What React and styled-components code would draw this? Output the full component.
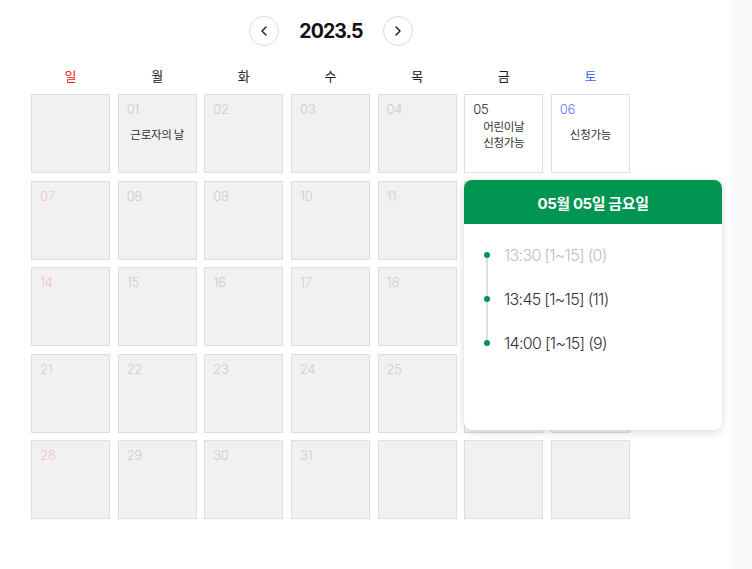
import React from "react";
import styled, { createGlobalStyle } from "styled-components";
import { ChevronLeft, ChevronRight } from "lucide-react";

const Global = createGlobalStyle`
  html, body { margin: 0; padding: 0; background: #fff; }
  body { font-family: Inter, "Noto Sans CJK KR", sans-serif; color: #222; }
`;

const Page = styled.div`
  display: flex;
  height: 569px;
  overflow: hidden;
`;

const Main = styled.div`
  flex: 1;
  padding: 16px 0 0 31px;
`;

const SideStrip = styled.div`
  width: 21px;
  background: #fafafa;
`;

const Calendar = styled.div`
  width: 599px;
`;

const Header = styled.div`
  display: flex;
  align-items: center;
  justify-content: center;
  gap: 20px;
  height: 30px;
  padding-left: 1px;
`;

const NavButton = styled.button`
  width: 30px;
  height: 30px;
  border-radius: 50%;
  border: 1px solid #dcdcdc;
  background: #fff;
  display: flex;
  align-items: center;
  justify-content: center;
  padding: 0;
  color: #222;
  cursor: pointer;
`;

const Title = styled.div`
  font-family: Inter, sans-serif;
  font-weight: 700;
  font-size: 19.5px;
  letter-spacing: -0.9px;
  color: #111;
`;

const WeekRow = styled.div`
  display: grid;
  grid-template-columns: repeat(7, 1fr);
  column-gap: 7.5px;
  margin-top: 20px;
  height: 20px;
  margin-bottom: 8px;
`;

const WeekDay = styled.div`
  text-align: center;
  font-size: 13px;
  line-height: 20px;
  font-family: "Noto Sans CJK KR", sans-serif;
  color: ${(p) => (p.$tone === "sun" ? "#e8241c" : p.$tone === "sat" ? "#3d6cf0" : "#222")};
`;

const GridWrap = styled.div`
  position: relative;
`;

const Grid = styled.div`
  display: grid;
  grid-template-columns: repeat(7, 1fr);
  grid-auto-rows: 79px;
  gap: 7.5px;
`;

const Cell = styled.div`
  box-sizing: border-box;
  border: 1px solid #dedede;
  background: ${(p) => (p.$open ? "#fff" : "#f1f1f1")};
  display: grid;
  grid-template: 1fr / 1fr;
  padding: 0 8px;
`;

const DayNum = styled.div`
  grid-area: 1 / 1;
  align-self: start;
  margin-top: 6px;
  font-family: Inter, sans-serif;
  font-weight: 300;
  font-size: 13px;
  line-height: 16px;
  letter-spacing: -0.3px;
  color: ${(p) => p.$color};
`;

const Labels = styled.div`
  grid-area: 1 / 1;
  align-self: center;
  text-align: center;
  font-family: "Noto Sans CJK KR", sans-serif;
  font-size: 11.5px;
  line-height: 16px;
  color: #333;
  letter-spacing: -0.3px;
`;

const Popup = styled.div`
  position: absolute;
  left: 433px;
  top: 86px;
  width: 258px;
  height: 250px;
  background: #fff;
  border-radius: 8px;
  box-shadow: 0 2px 8px rgba(0, 0, 0, 0.16);
  overflow: hidden;
  display: flex;
  flex-direction: column;
`;

const PopupHead = styled.div`
  height: 44px;
  background: #009551;
  color: #fff;
  display: flex;
  align-items: center;
  justify-content: center;
  font-family: Inter, "Noto Sans CJK KR", sans-serif;
  font-weight: 700;
  font-size: 15px;
  letter-spacing: -0.4px;
`;

const TimeList = styled.ul`
  list-style: none;
  margin: 9px 0 0 0;
  padding: 0 0 0 20px;
  position: relative;
  &::before {
    content: "";
    position: absolute;
    left: 22px;
    top: 22px;
    bottom: 22px;
    width: 2px;
    background: #dddddd;
  }
`;

const TimeItem = styled.li`
  height: 44px;
  display: flex;
  align-items: center;
  gap: 14px;
  font-family: Inter, sans-serif;
  font-weight: 300;
  font-size: 16px;
  letter-spacing: -0.7px;
  color: ${(p) => (p.$disabled ? "#bdbdbd" : "#333")};
  position: relative;
`;

const Dot = styled.span`
  width: 6px;
  height: 6px;
  border-radius: 50%;
  background: #009551;
  flex: none;
  position: relative;
`;

const days = [
  { n: "" },
  { n: "01", labels: ["근로자의 날"] },
  { n: "02" },
  { n: "03" },
  { n: "04" },
  { n: "05", open: true, labels: ["어린이날", "신청가능"] },
  { n: "06", open: true, labels: ["신청가능"] },
  ...Array.from({ length: 25 }, (_, i) => ({ n: String(i + 7).padStart(2, "0") })),
  { n: "" },
  { n: "" },
  { n: "" },
];

function numColor(d, idx) {
  const col = idx % 7;
  if (d.open) return col === 6 ? "#5b7bff" : "#222";
  if (col === 0) return "#f3c4c4";
  return "#cccccc";
}

const times = [
  { t: "13:30 [1~15] (0)", disabled: true },
  { t: "13:45 [1~15] (11)" },
  { t: "14:00 [1~15] (9)" },
];

export default function App() {
  const week = ["일", "월", "화", "수", "목", "금", "토"];
  return (
    <Page>
      <Global />
      <Main>
        <Calendar>
          <Header>
            <NavButton aria-label="prev">
              <ChevronLeft size={16} strokeWidth={2.2} />
            </NavButton>
            <Title>2023.5</Title>
            <NavButton aria-label="next">
              <ChevronRight size={16} strokeWidth={2.2} />
            </NavButton>
          </Header>
          <WeekRow>
            {week.map((w, i) => (
              <WeekDay key={w} $tone={i === 0 ? "sun" : i === 6 ? "sat" : ""}>
                {w}
              </WeekDay>
            ))}
          </WeekRow>
          <GridWrap>
            <Grid>
              {days.map((d, i) => (
                <Cell key={i} $open={d.open}>
                  {d.n && <DayNum $color={numColor(d, i)}>{d.n}</DayNum>}
                  {d.labels && (
                    <Labels>
                      {d.labels.map((l) => (
                        <div key={l}>{l}</div>
                      ))}
                    </Labels>
                  )}
                </Cell>
              ))}
            </Grid>
            <Popup>
              <PopupHead>05월 05일 금요일</PopupHead>
              <TimeList>
                {times.map((t) => (
                  <TimeItem key={t.t} $disabled={t.disabled}>
                    <Dot />
                    {t.t}
                  </TimeItem>
                ))}
              </TimeList>
            </Popup>
          </GridWrap>
        </Calendar>
      </Main>
      <SideStrip />
    </Page>
  );
}
